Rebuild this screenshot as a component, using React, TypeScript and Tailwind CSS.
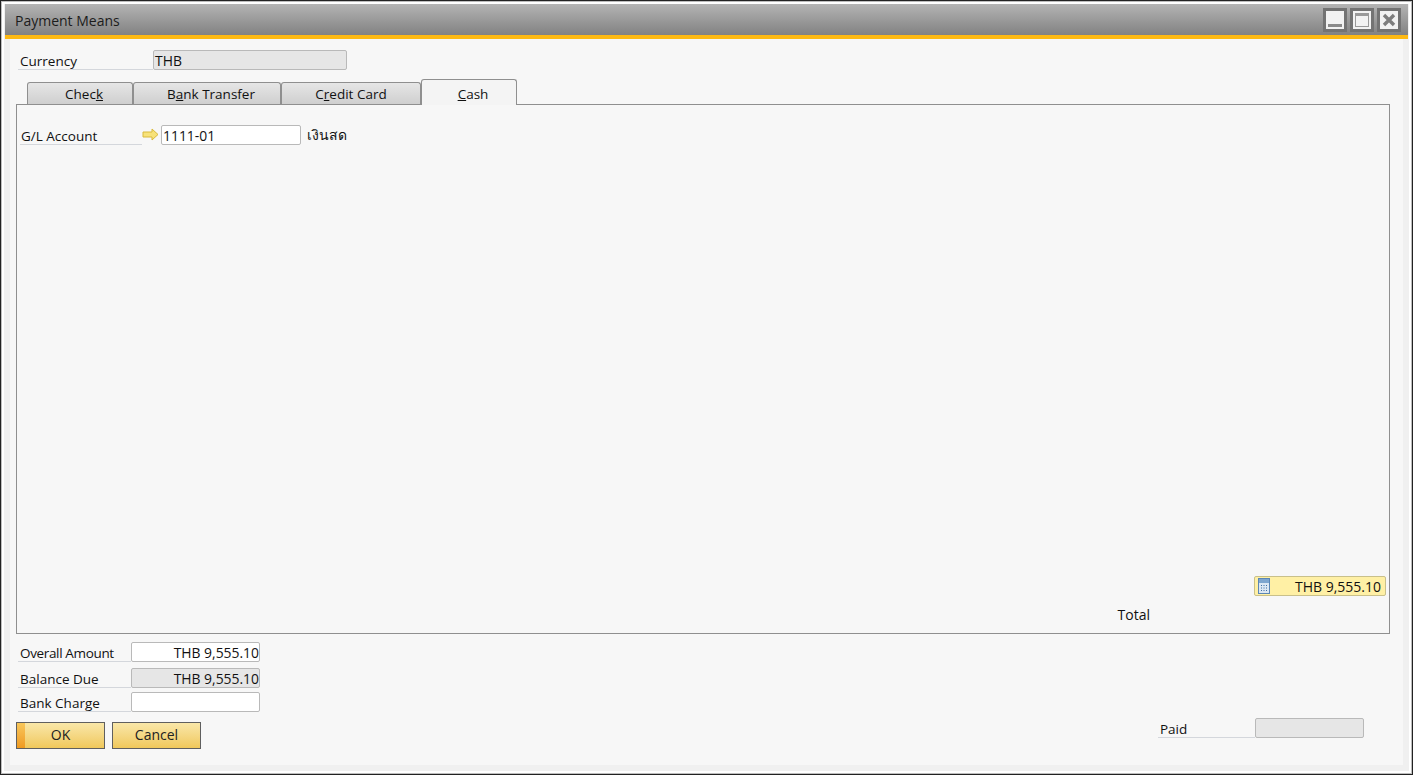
const F = "[font-family:'Open_Sans','Noto_Sans',sans-serif]";

function Label({ children, w, className = "" }: { children: React.ReactNode; w: string; className?: string }) {
  return (
    <div className={`${w} h-[20px] border-b border-[#d4d7dc] pl-[2px] pt-[1px] text-[13.5px] leading-[20px] text-[#111] ${className}`}>
      {children}
    </div>
  );
}

function Field({ children, w, ro, right }: { children?: React.ReactNode; w: string; ro?: boolean; right?: boolean }) {
  return (
    <div
      className={`${w} h-[20px] rounded-[2px] border border-[#b9b9b9] text-[13.9px] leading-[19px] text-[#111] ${ro ? "bg-[#e6e6e6]" : "bg-white"} ${right ? "pr-0 text-right" : "pl-[1px]"}`}
    >
      {children}
    </div>
  );
}

function Tab({ children, w, active, className = "" }: { children: React.ReactNode; w: string; active?: boolean; className?: string }) {
  return active ? (
    <div className={`${w} ${className} z-10 -mb-px h-[26px] rounded-t-[3px] border border-b-0 border-[#8f8f8f] bg-[#f4f4f4] pt-[4px] text-center text-[13.5px] leading-[20px] text-[#111]`}>
      {children}
    </div>
  ) : (
    <div className={`${w} ${className} h-[22px] rounded-t-[3px] border border-b-0 border-[#8f8f8f] bg-linear-to-b from-[#e6e6e6] to-[#cfcfcf] pt-[1px] text-center text-[13.5px] leading-[20px] text-[#111]`}>
      {children}
    </div>
  );
}

function WinBtn({ children }: { children: React.ReactNode }) {
  return (
    <div className="flex h-[24px] w-[24px] items-center justify-center border-[3px] border-[#737373] bg-[#f2f2f2]">
      {children}
    </div>
  );
}

function Btn({ children, def }: { children: React.ReactNode; def?: boolean }) {
  return (
    <div className="relative h-[27px] w-[89px] border border-[#5f5f5f] bg-linear-to-b from-[#f9e7a8] to-[#f0c85a] text-center text-[14px] leading-[24px] text-[#222]">
      {def && <div className="absolute left-0 top-0 h-full w-[8px] bg-linear-to-b from-[#f8c75a] to-[#ef9a1e]" />}
      <span className="relative">{children}</span>
    </div>
  );
}

export default function App() {
  return (
    <div className={`${F} flex h-[775px] w-[1413px] flex-col overflow-hidden border border-[#222] bg-[#bdbdbd] p-[1px]`}>
      <div className="flex flex-1 flex-col border-[2px] border-white bg-[#f0f0f0] pl-[1px] pr-[1px] pb-[1px]">
        <div className="flex h-[31px] items-center justify-between bg-linear-to-b from-[#b4b4b4] to-[#828282] pl-[10px] pr-[7px]">
          <span className="pt-[2px] text-[14px] text-[#1c1c1c]">Payment Means</span>
          <div className="flex gap-[3px]">
            <WinBtn>
              <svg width="18" height="18" viewBox="0 0 18 18"><rect x="2" y="13" width="14" height="3" fill="#8a8a8a" /></svg>
            </WinBtn>
            <WinBtn>
              <svg width="18" height="18" viewBox="0 0 18 18"><rect x="2.5" y="2.5" width="13" height="13" fill="none" stroke="#999" /><rect x="2" y="2" width="14" height="3" fill="#999" /></svg>
            </WinBtn>
            <WinBtn>
              <svg width="18" height="18" viewBox="0 0 18 18"><path d="M4 4 L14 14 M14 4 L4 14" stroke="#7d7d7d" strokeWidth="3.4" /></svg>
            </WinBtn>
          </div>
        </div>
        <div className="h-[4px] bg-[#fdb913]" />
        <div className="mx-[5px] mb-[5px] flex flex-1 flex-col bg-[#f7f7f7] pl-[6px] pr-[13px] pt-[11px]">
          <div className="flex">
            <Label w="w-[135px]" className="ml-[2px]">Currency</Label>
            <Field w="w-[194px]" ro>THB</Field>
          </div>
          <div className="ml-[11px] mt-[9px] flex items-end">
            <Tab w="w-[106px]" className="pl-[8px]">Chec<u>k</u></Tab>
            <Tab w="w-[148px]" className="pl-[8px]">B<u>a</u>nk Transfer</Tab>
            <Tab w="w-[140px]">C<u>r</u>edit Card</Tab>
            <Tab w="w-[96px]" className="pl-[8px]" active><u>C</u>ash</Tab>
          </div>
          <div className="flex h-[530px] flex-col border border-[#8f8f8f] bg-[#f7f7f7] pt-[19px]">
            <div className="flex items-center">
              <Label w="w-[122px]" className="ml-[3px] !pl-[1px]">G/L Account</Label>
              <svg width="17" height="13" viewBox="0 0 17 13" className="mr-[2px]">
                <path d="M1 4 H10 V1 L16 6.5 L10 12 V9 H1 Z" fill="#f7e27a" stroke="#d9b93a" />
              </svg>
              <Field w="w-[140px]">1111-01</Field>
              <span className="ml-[6px] text-[14px] font-medium text-[#111] [font-family:'Noto_Sans','Open_Sans',sans-serif]">เงินสด</span>
            </div>
            <div className="mt-auto flex flex-col items-end pb-[8px] pr-[3px]">
              <div className="flex h-[20px] w-[132px] items-center justify-between rounded-[2px] border border-[#c9c08a] bg-[#fff0a5] pl-[3px] pr-[4px] text-[14px] text-[#111]">
                <svg width="12" height="16" viewBox="0 0 12 16">
                  <rect x="0.5" y="0.5" width="11" height="15" fill="#dbe7f3" stroke="#5b86b5" />
                  <rect x="1" y="1" width="10" height="4" fill="#7ea6cf" />
                  <path d="M3 7h1v1H3zM5.5 7h1v1h-1zM8 7h1v1H8zM3 9.5h1v1H3zM5.5 9.5h1v1h-1zM8 9.5h1v1H8zM3 12h1v1H3zM5.5 12h1v1h-1zM8 12h1v1H8z" fill="#3f6ea3" />
                </svg>
                <span>THB 9,555.10</span>
              </div>
              <div className="mr-[236px] mt-[9px] text-[14px] leading-[20px] text-[#111]">Total</div>
            </div>
          </div>
          <div className="mt-[8px] flex flex-1 justify-between">
            <div className="flex flex-col">
              <div className="ml-[2px] flex">
                <Label w="w-[113px]" className="tracking-[-0.35px]">Overall Amount</Label>
                <Field w="w-[129px]" right>THB 9,555.10</Field>
              </div>
              <div className="ml-[2px] mt-[6px] flex">
                <Label w="w-[113px]">Balance Due</Label>
                <Field w="w-[129px]" ro right>THB 9,555.10</Field>
              </div>
              <div className="ml-[2px] mt-[4px] flex">
                <Label w="w-[113px]">Bank Charge</Label>
                <Field w="w-[129px]" />
              </div>
              <div className="mt-[10px] flex gap-[7px]">
                <Btn def>OK</Btn>
                <Btn>Cancel</Btn>
              </div>
            </div>
            <div className="mt-auto flex pb-[27px] pr-[26px]">
              <Label w="w-[97px]" className="!pl-[2px]">Paid</Label>
              <Field w="w-[109px]" ro />
            </div>
          </div>
        </div>
      </div>
    </div>
  );
}
